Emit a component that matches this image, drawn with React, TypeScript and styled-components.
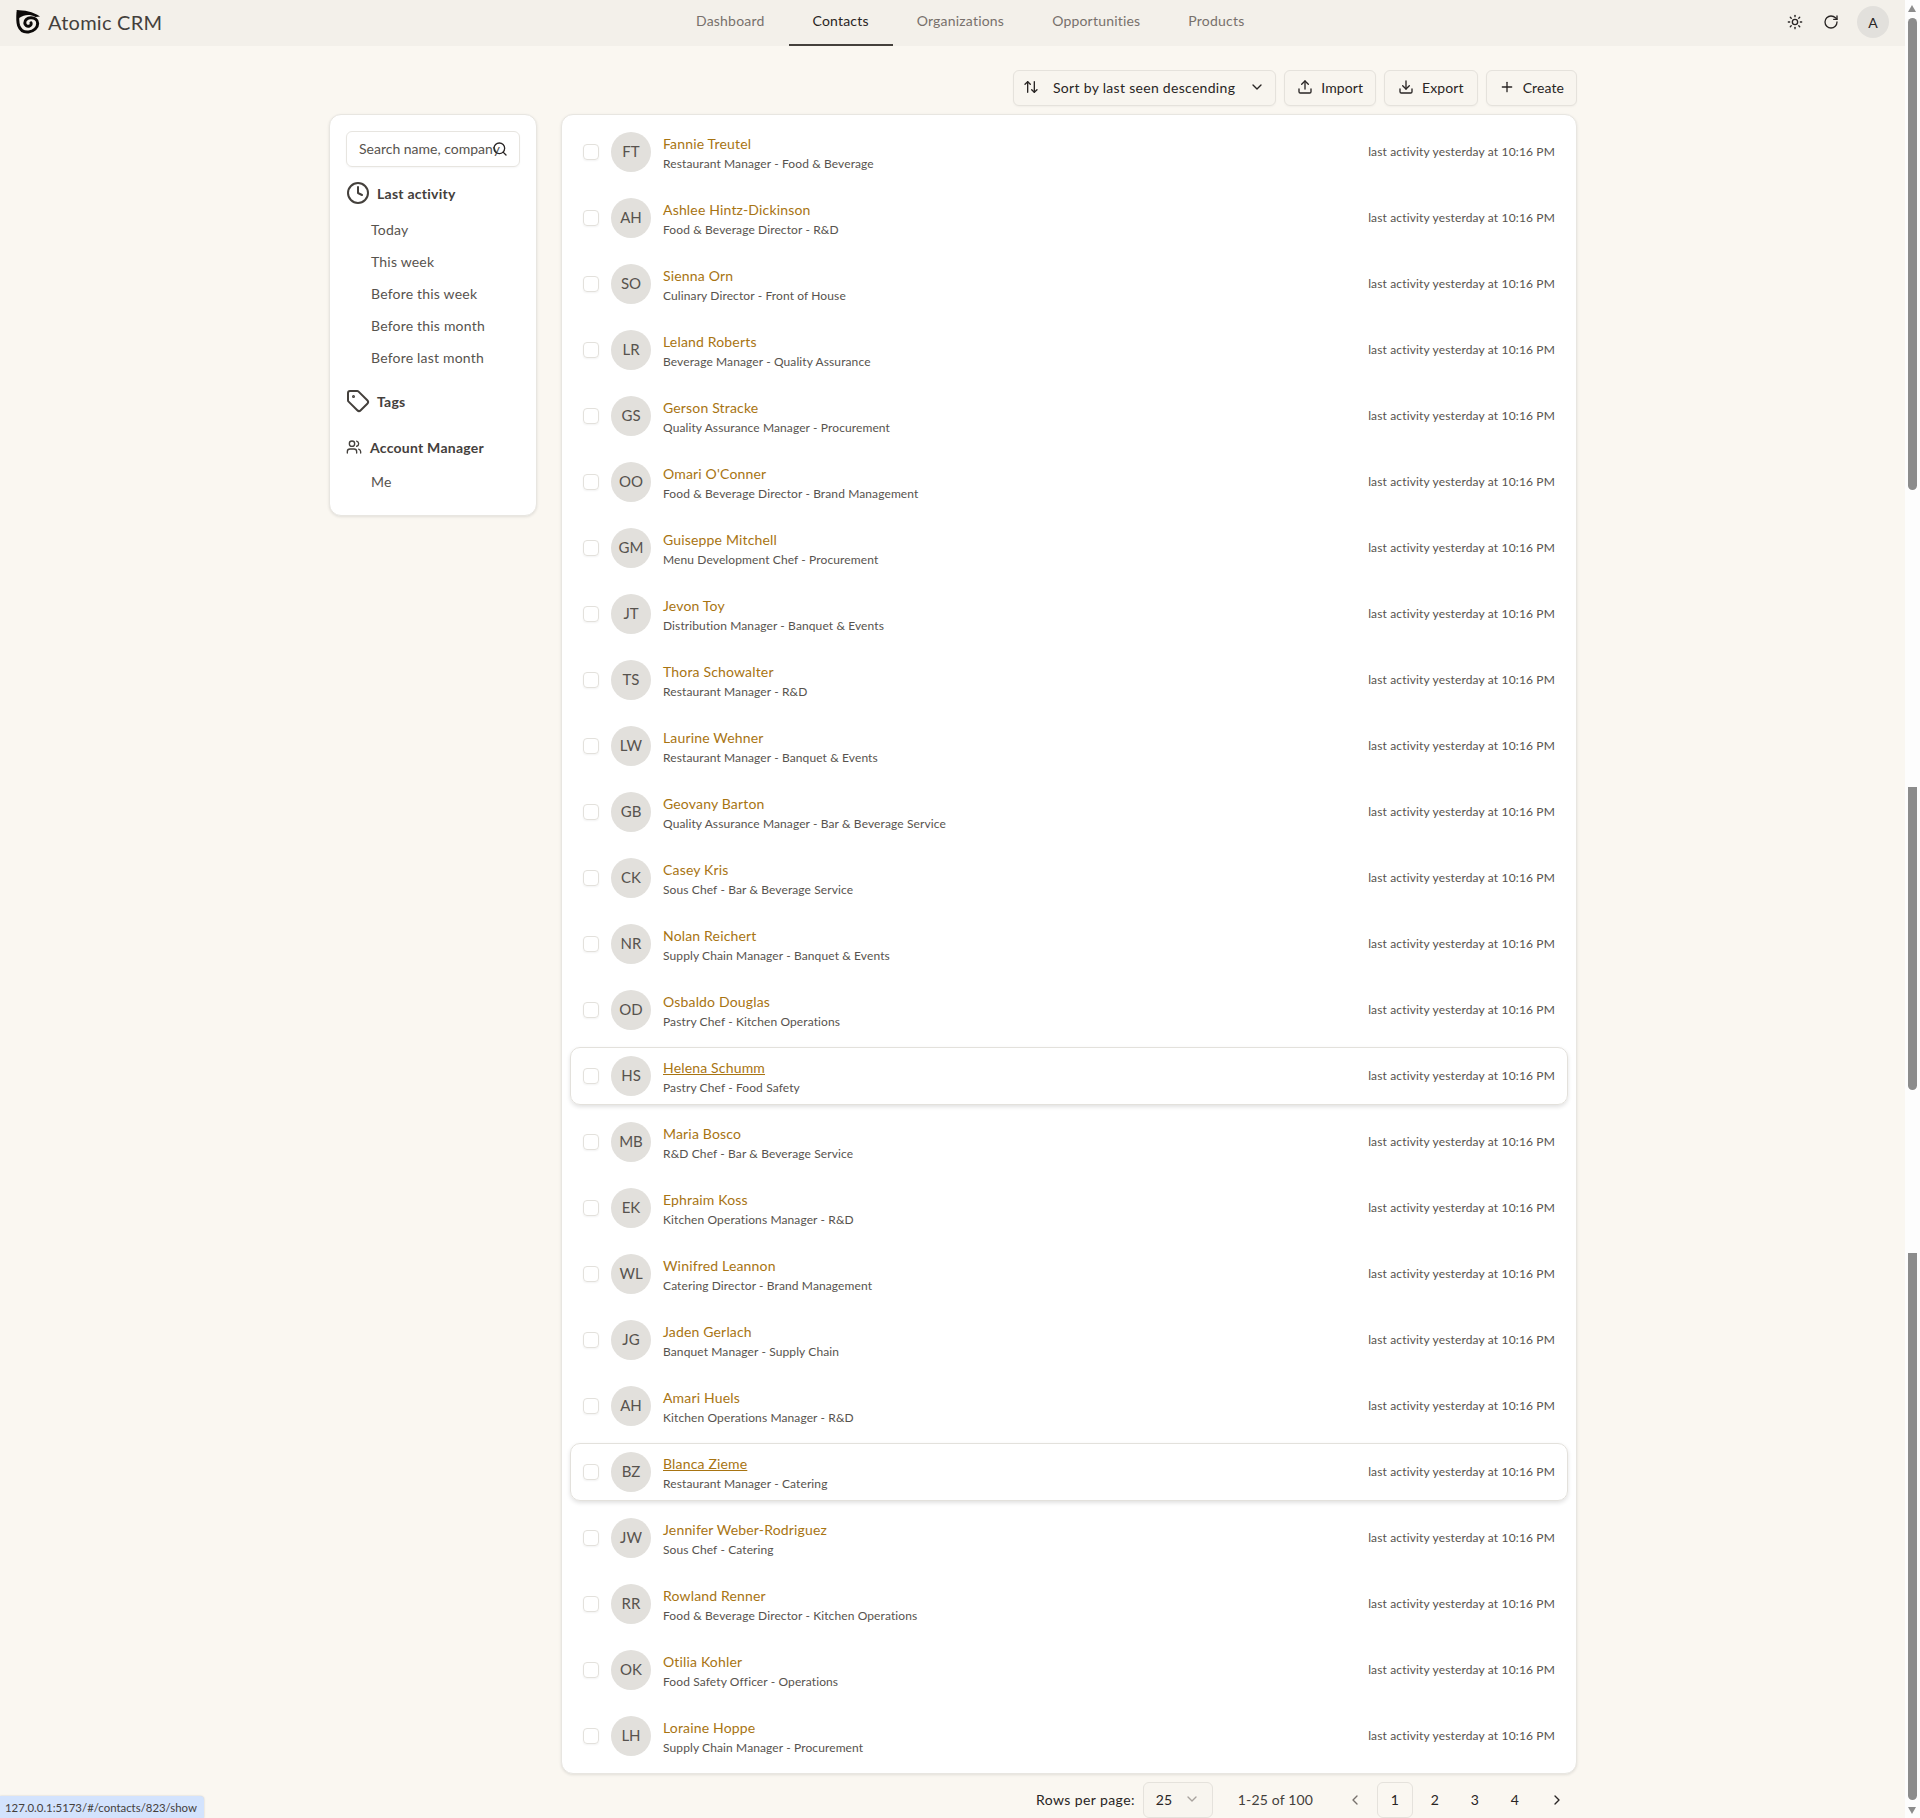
import styled, { createGlobalStyle } from "styled-components";
import {
  ArrowUpDown,
  ChevronDown,
  ChevronLeft,
  ChevronRight,
  Clock,
  Download,
  Plus,
  RotateCw,
  Search,
  Sun,
  Tag,
  Upload,
  Users,
} from "lucide-react";

const GlobalStyle = createGlobalStyle`
  html, body {
    margin: 0;
    padding: 0;
    background: #faf7f1;
    color: #44403c;
    font-family: "Lato", "Noto Sans", sans-serif;
    overflow: hidden;
  }
  * { box-sizing: border-box; }
`;

const Page = styled.div`
  position: relative;
  width: 1920px;
  height: 1818px;
  overflow: hidden;
  padding-right: 15px;
`;

const Header = styled.header`
  display: flex;
  align-items: center;
  height: 46px;
  background: #f3f0ea;
  padding: 0 16px 2px 15px;
`;

const Brand = styled.div`
  display: flex;
  align-items: center;
  gap: 7px;
  width: 657px;
  font-size: 20px;
  letter-spacing: 0.25px;
  color: #44403c;
`;

const Nav = styled.nav`
  display: flex;
  align-self: stretch;
  flex: 1;
`;

const NavItem = styled.a<{ $active?: boolean }>`
  display: flex;
  align-items: center;
  height: 46px;
  padding: 0 24px 4px;
  font-size: 14px;
  letter-spacing: 0.2px;
  color: ${(p) => (p.$active ? "#292524" : "#78716c")};
  border-bottom: 2px solid ${(p) => (p.$active ? "#44403c" : "transparent")};
`;

const HeaderActions = styled.div`
  display: flex;
  align-items: center;
  color: #292524;
`;

const HeaderIcon = styled.span`
  display: flex;
  width: 36px;
  justify-content: center;
`;

const UserBadge = styled.div`
  display: flex;
  align-items: center;
  justify-content: center;
  width: 32px;
  height: 32px;
  margin-left: 8px;
  border-radius: 50%;
  background: #e2e0dc;
  font-size: 14px;
  color: #292524;
`;

const Main = styled.main`
  width: 1248px;
  margin-left: 329px;
`;

const Toolbar = styled.div`
  display: flex;
  justify-content: flex-end;
  gap: 8px;
  padding-top: 24px;
  height: 68px;
`;

const Button = styled.div<{ $pad?: number }>`
  display: flex;
  align-items: center;
  gap: 8px;
  height: 36px;
  padding: 0 ${(p) => p.$pad ?? 12}px 2px;
  border: 1px solid #e5e2dc;
  border-radius: 6px;
  background: #f8f5ef;
  font-size: 14px;
  letter-spacing: 0.1px;
  color: #292524;
  box-shadow: 0 1px 2px rgba(0, 0, 0, 0.04);
`;

const SortButton = styled(Button)`
  padding: 0 10px 2px 9px;
`;

const SortLabel = styled.span`
  margin: 0 6px;
  letter-spacing: 0.3px;
`;

const Columns = styled.div`
  display: flex;
  align-items: flex-start;
  gap: 24px;
`;

const Card = styled.div`
  background: #fff;
  border: 1px solid #e8e6e1;
  border-radius: 12px;
  box-shadow: 0 1px 3px rgba(0, 0, 0, 0.1);
`;

const Sidebar = styled(Card)`
  width: 208px;
  height: 402px;
  padding: 16px;
  flex-shrink: 0;
`;

const SearchBox = styled.div`
  position: relative;
  display: flex;
  align-items: center;
  height: 36px;
  padding: 0 0 1px 12px;
  border: 1px solid #e7e5e0;
  border-radius: 6px;
  font-size: 14px;
  color: #57534e;
  overflow: hidden;
  white-space: nowrap;
  box-shadow: 0 1px 2px rgba(0, 0, 0, 0.04);
`;

const SearchIcon = styled.span`
  position: absolute;
  right: 11px;
  top: 9px;
  display: flex;
  color: #292524;
`;

const FilterTitle = styled.div<{ $gap: number; $top: number }>`
  display: flex;
  align-items: center;
  gap: ${(p) => p.$gap}px;
  margin-top: ${(p) => p.$top}px;
  height: 24px;
  font-size: 14px;
  font-weight: 700;
  letter-spacing: 0.25px;
  color: #44403c;
`;

const FilterList = styled.div<{ $top: number }>`
  display: flex;
  flex-direction: column;
  gap: 8px;
  padding: ${(p) => p.$top}px 0 0 25px;
`;

const FilterItem = styled.div`
  height: 24px;
  line-height: 24px;
  font-size: 14px;
  letter-spacing: 0.2px;
  color: #57534e;
`;

const ListCard = styled(Card)`
  display: flex;
  flex-direction: column;
  gap: 8px;
  width: 1016px;
  height: 1660px;
  padding: 8px;
`;

const Row = styled.div<{ $hover?: boolean }>`
  display: flex;
  align-items: center;
  height: 58px;
  padding: 0 12px;
  border-radius: 10px;
  border: 1px solid ${(p) => (p.$hover ? "#e3e1dc" : "transparent")};
  box-shadow: ${(p) => (p.$hover ? "0 2px 4px rgba(0, 0, 0, 0.12)" : "none")};
`;

const Check = styled.span`
  width: 16px;
  height: 16px;
  border: 1px solid #e3e1dc;
  border-radius: 4px;
  box-shadow: 0 1px 2px rgba(0, 0, 0, 0.05);
  flex-shrink: 0;
`;

const Avatar = styled.div`
  display: flex;
  align-items: center;
  justify-content: center;
  width: 40px;
  height: 40px;
  margin: 0 12px;
  padding-bottom: 2px;
  border-radius: 50%;
  background: #e2e0dc;
  font-size: 15px;
  color: #57534e;
  flex-shrink: 0;
`;

const RowText = styled.div`
  flex: 1;
  padding-top: 3px;
`;

const Name = styled.div<{ $hover?: boolean }>`
  font-size: 14px;
  line-height: 20px;
  letter-spacing: 0.17px;
  color: #a87412;
  text-decoration: ${(p) => (p.$hover ? "underline" : "none")};
`;

const Role = styled.div`
  font-size: 12px;
  line-height: 19px;
  letter-spacing: 0.11px;
  color: #57534e;
`;

const Activity = styled.div`
  padding-bottom: 1px;
  font-size: 12px;
  letter-spacing: 0.15px;
  color: #57534e;
`;

const Pagination = styled.div`
  display: flex;
  justify-content: flex-end;
  align-items: center;
  height: 36px;
  margin-top: 8px;
  padding-right: 2px;
  font-size: 14px;
  letter-spacing: 0.15px;
  color: #292524;
`;

const RowsLabel = styled.span`
  margin: 0 8px 2px 0;
  letter-spacing: 0.4px;
`;

const RowsSelect = styled(Button)`
  width: 70px;
  justify-content: space-between;
  color: #292524;
  box-shadow: none;
`;

const Range = styled.span`
  margin: 0 24px 2px 25px;
  color: #44403c;
`;

const PageArrow = styled.span<{ $dim?: boolean }>`
  display: flex;
  justify-content: center;
  width: 36px;
  margin: ${(p) => (p.$dim ? "0 2px 0 0" : "0 0 0 4px")};
  color: ${(p) => (p.$dim ? "#78716c" : "#292524")};
`;

const PageNum = styled.span<{ $active?: boolean }>`
  display: flex;
  align-items: center;
  justify-content: center;
  width: 36px;
  height: 36px;
  margin: 0 2px;
  padding-bottom: 2px;
  border: 1px solid ${(p) => (p.$active ? "#e5e2dc" : "transparent")};
  border-radius: 6px;
`;

const StatusBubble = styled.div`
  position: absolute;
  left: 0;
  bottom: 0;
  height: 22px;
  padding: 0 7px 0 5px;
  line-height: 23px;
  font-size: 11.4px;
  color: #44403c;
  background: #d3e3fd;
  border-top-right-radius: 4px;
  box-shadow: 0 0 2px rgba(0, 0, 0, 0.2);
`;

const ScrollTrack = styled.div`
  position: absolute;
  top: 0;
  right: 0;
  bottom: 0;
  width: 15px;
  background: #fdfdfd;
`;

const ScrollThumb = styled.div<{ $top: number; $height: number; $flat?: boolean }>`
  position: absolute;
  left: 3px;
  top: ${(p) => p.$top}px;
  width: 9px;
  height: ${(p) => p.$height}px;
  background: #8c8c8c;
  border-radius: ${(p) => (p.$flat ? "0 0 5px 5px" : "5px")};
`;

const ScrollArrow = styled.div<{ $down?: boolean }>`
  position: absolute;
  left: 3px;
  ${(p) => (p.$down ? "bottom: 4px;" : "top: 5px;")}
  width: 0;
  height: 0;
  border-left: 4.5px solid transparent;
  border-right: 4.5px solid transparent;
  ${(p) => (p.$down ? "border-top" : "border-bottom")}: 7px solid #8c8c8c;
`;

const Logo = () => (
  <svg width="26" height="26" viewBox="0 0 26 26" fill="none">
    <path
      d="M3 3 C2.6 8 2.5 13 3.6 16.5 C5.2 21 9 23.5 13.5 23 C19 22.4 22.7 18.5 22.7 14.5 C22.7 10.8 19.5 8.6 15.8 8.8 C12.2 9 9.6 11 9.8 14 C10 16.2 12 17.7 14 17.2 C15.8 16.8 16.6 15.2 16 13.8"
      stroke="#0c0a09"
      strokeWidth="3"
      strokeLinecap="round"
    />
    <path d="M1.5 1 C9 1.2 18 2.5 25 7.5 L20.5 8 C15 5 9.5 5.4 4.2 9 Z" fill="#0c0a09" />
  </svg>
);

const contacts = [
  ["FT", "Fannie Treutel", "Restaurant Manager - Food & Beverage"],
  ["AH", "Ashlee Hintz-Dickinson", "Food & Beverage Director - R&D"],
  ["SO", "Sienna Orn", "Culinary Director - Front of House"],
  ["LR", "Leland Roberts", "Beverage Manager - Quality Assurance"],
  ["GS", "Gerson Stracke", "Quality Assurance Manager - Procurement"],
  ["OO", "Omari O'Conner", "Food & Beverage Director - Brand Management"],
  ["GM", "Guiseppe Mitchell", "Menu Development Chef - Procurement"],
  ["JT", "Jevon Toy", "Distribution Manager - Banquet & Events"],
  ["TS", "Thora Schowalter", "Restaurant Manager - R&D"],
  ["LW", "Laurine Wehner", "Restaurant Manager - Banquet & Events"],
  ["GB", "Geovany Barton", "Quality Assurance Manager - Bar & Beverage Service"],
  ["CK", "Casey Kris", "Sous Chef - Bar & Beverage Service"],
  ["NR", "Nolan Reichert", "Supply Chain Manager - Banquet & Events"],
  ["OD", "Osbaldo Douglas", "Pastry Chef - Kitchen Operations"],
  ["HS", "Helena Schumm", "Pastry Chef - Food Safety", "hover"],
  ["MB", "Maria Bosco", "R&D Chef - Bar & Beverage Service"],
  ["EK", "Ephraim Koss", "Kitchen Operations Manager - R&D"],
  ["WL", "Winifred Leannon", "Catering Director - Brand Management"],
  ["JG", "Jaden Gerlach", "Banquet Manager - Supply Chain"],
  ["AH", "Amari Huels", "Kitchen Operations Manager - R&D"],
  ["BZ", "Blanca Zieme", "Restaurant Manager - Catering", "hover"],
  ["JW", "Jennifer Weber-Rodriguez", "Sous Chef - Catering"],
  ["RR", "Rowland Renner", "Food & Beverage Director - Kitchen Operations"],
  ["OK", "Otilia Kohler", "Food Safety Officer - Operations"],
  ["LH", "Loraine Hoppe", "Supply Chain Manager - Procurement"],
];

const activityFilters = ["Today", "This week", "Before this week", "Before this month", "Before last month"];

function App() {
  return (
    <Page>
      <GlobalStyle />
      <Header>
        <Brand>
          <Logo />
          Atomic CRM
        </Brand>
        <Nav>
          <NavItem>Dashboard</NavItem>
          <NavItem $active>Contacts</NavItem>
          <NavItem>Organizations</NavItem>
          <NavItem>Opportunities</NavItem>
          <NavItem>Products</NavItem>
        </Nav>
        <HeaderActions>
          <HeaderIcon><Sun size={16} /></HeaderIcon>
          <HeaderIcon><RotateCw size={16} /></HeaderIcon>
          <UserBadge>A</UserBadge>
        </HeaderActions>
      </Header>
      <Main>
        <Toolbar>
          <SortButton>
            <ArrowUpDown size={16} />
            <SortLabel>Sort by last seen descending</SortLabel>
            <ChevronDown size={16} />
          </SortButton>
          <Button><Upload size={16} />Import</Button>
          <Button $pad={13}><Download size={16} />Export</Button>
          <Button><Plus size={16} />Create</Button>
        </Toolbar>
        <Columns>
          <Sidebar>
            <SearchBox>
              Search name, company
              <SearchIcon><Search size={16} /></SearchIcon>
            </SearchBox>
            <FilterTitle $gap={7} $top={14}><Clock size={24} />Last activity</FilterTitle>
            <FilterList $top={13}>
              {activityFilters.map((f) => <FilterItem key={f}>{f}</FilterItem>)}
            </FilterList>
            <FilterTitle $gap={7} $top={19}><Tag size={24} />Tags</FilterTitle>
            <FilterTitle $gap={8} $top={22}><Users size={16} />Account Manager</FilterTitle>
            <FilterList $top={11}>
              <FilterItem>Me</FilterItem>
            </FilterList>
          </Sidebar>
          <div>
            <ListCard>
              {contacts.map(([initials, name, role, hover]) => (
                <Row key={name} $hover={!!hover}>
                  <Check />
                  <Avatar>{initials}</Avatar>
                  <RowText>
                    <Name $hover={!!hover}>{name}</Name>
                    <Role>{role}</Role>
                  </RowText>
                  <Activity>last activity yesterday at 10:16 PM</Activity>
                </Row>
              ))}
            </ListCard>
            <Pagination>
              <RowsLabel>Rows per page:</RowsLabel>
              <RowsSelect>25<ChevronDown size={16} color="#a8a29e" /></RowsSelect>
              <Range>1-25 of 100</Range>
              <PageArrow $dim><ChevronLeft size={16} /></PageArrow>
              <PageNum $active>1</PageNum>
              <PageNum>2</PageNum>
              <PageNum>3</PageNum>
              <PageNum>4</PageNum>
              <PageArrow><ChevronRight size={16} /></PageArrow>
            </Pagination>
          </div>
        </Columns>
      </Main>
      <StatusBubble>127.0.0.1:5173/#/contacts/823/show</StatusBubble>
      <ScrollTrack>
        <ScrollArrow />
        <ScrollThumb $top={18} $height={472} />
        <ScrollThumb $top={787} $height={303} $flat />
        <ScrollThumb $top={1253} $height={547} $flat />
        <ScrollArrow $down />
      </ScrollTrack>
    </Page>
  );
}

export default App;
